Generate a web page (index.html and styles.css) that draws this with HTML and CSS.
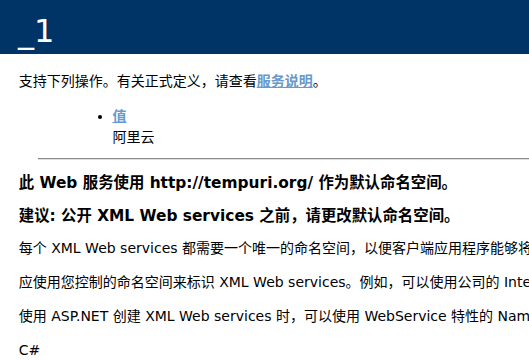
FILE: index.html
```
<!DOCTYPE html>
<html lang="zh-CN">
<head>
    <meta charset="UTF-8">
    <meta name="viewport" content="width=device-width, initial-scale=1.0">
    <title>_1 Web 服务</title>
    <link rel="stylesheet" href="styles.css">
</head>
<body>

    <div id="content">
        <p class="heading1">_1</p>

        <p class="intro first">支持下列操作。有关正式定义，请查看<a href="#wsdl">服务说明</a>。</p>
        <ul>
            <li><a href="#op">值</a><br><span>阿里云</span></li>
        </ul>

        <hr>
        <h3>此 Web 服务使用 http://tempuri.org/ 作为默认命名空间。</h3>
        <h3>建议: 公开 XML Web services 之前，请更改默认命名空间。</h3>
        <p class="intro">每个 XML Web services 都需要一个唯一的命名空间，以便客户端应用程序能够将它与 Web 上的其他服务区分开来。http://tempuri.org/ 可用于正在开发中的 XML Web services，而已发布的 XML Web services 应使用更为永久的命名空间。</p>
        <p class="intro">应使用您控制的命名空间来标识 XML Web services。例如，可以使用公司的 Internet 域名作为命名空间的一部分。虽然很多 XML Web services 命名空间看似 URL，但它们无需指向 Web 上的实际资源。(XML Web services 命名空间是 URI。)</p>
        <p class="intro">使用 ASP.NET 创建 XML Web services 时，可以使用 WebService 特性的 Namespace 属性更改默认命名空间。WebService 特性是一个应用于包含 XML Web services 方法的类的特性。</p>
        <p class="intro">C#</p>
    </div>

</body>
</html>
```

FILE: styles.css
```
html, body {
    overflow: hidden;
}
body {
    color: #000000;
    background-color: white;
    font-family: "DejaVu Sans", "Noto Sans CJK SC", sans-serif;
    margin: 0;
}
#content {
    margin-left: 37.5px;
    font-size: 14px;
    padding-bottom: 2em;
}
a:link, a:visited {
    color: #6699cc;
    font-weight: bold;
    text-decoration: underline;
}
p {
    color: #000000;
    margin-top: 0;
    margin-bottom: 15px;
    line-height: 19px;
    white-space: nowrap;
}
.heading1 {
    color: #ffffff;
    font-family: "DejaVu Sans", sans-serif;
    font-size: 32px;
    line-height: 38px;
    font-weight: normal;
    background-color: #003366;
    margin: 0 0 18px -37.5px;
    padding: 12px 0 4px 18px;
    width: 105%;
}
.intro {
    margin-left: -18.75px;
}
ul {
    margin: 0 0 10px 25px;
    padding-left: 50px;
}
li {
    line-height: 21px;
}
hr {
    margin: 0;
    height: 0;
    border: none;
    border-top: 1px solid #8a8a8a;
    border-bottom: 1px solid #e0e0e0;
}
h3 {
    font-size: 15.4px;
    line-height: 21px;
    margin: 13px 0 12px -18.75px;
    white-space: nowrap;
}
h3 + h3 {
    margin-top: 0;
}
```
